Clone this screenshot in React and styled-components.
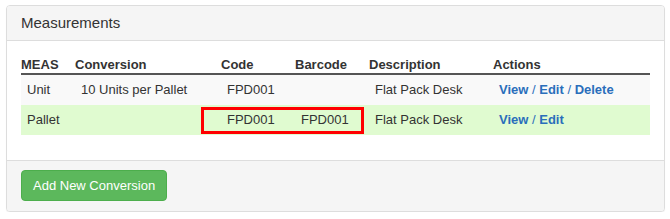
import React from 'react';
import styled, { createGlobalStyle } from 'styled-components';

const GlobalStyle = createGlobalStyle`
  html, body {
    margin: 0;
    padding: 0;
    background: #fff;
    font-family: "Liberation Sans", Arial, sans-serif;
    font-size: 13px;
    color: #333;
  }
`;

const Panel = styled.div`
  margin: 5px 0 0 6px;
  width: 659px;
  box-sizing: border-box;
  border: 1px solid #ddd;
  border-radius: 4px;
  background: #fff;
  box-shadow: 0 1px 1px rgba(0, 0, 0, 0.05);
  overflow: hidden;
`;

const PanelHeading = styled.div`
  padding: 8px 14px 8px 14px;
  background: #f5f5f5;
  border-bottom: 1px solid #ddd;
  font-size: 15px;
  line-height: 18px;
  color: #333;
`;

const PanelBody = styled.div`
  padding: 15px 14px 15px 14px;
`;

const TableWrap = styled.div`
  position: relative;
  margin-bottom: 10px;
`;

const Table = styled.table`
  width: 629px;
  border-collapse: collapse;
  table-layout: fixed;
`;

const Th = styled.th`
  text-align: left;
  font-weight: bold;
  padding: 0;
  line-height: 17px;
  border-bottom: 2px solid #555;
  color: #333;
`;

const Row = styled.tr`
  background: ${p => (p.$success ? '#e0fbd0' : '#f9f9f9')};
`;

const Td = styled.td`
  padding: 6px;
  line-height: 18px;
  white-space: nowrap;
`;

const Actions = styled.span`
  color: #2a6ebb;
`;

const ActionLink = styled.a`
  color: #2a6ebb;
  font-weight: bold;
  text-decoration: none;
  cursor: pointer;
`;

const Highlight = styled.div`
  position: absolute;
  left: 180px;
  top: 51px;
  width: 163px;
  height: 27px;
  box-sizing: border-box;
  border: 3px solid #f00;
  pointer-events: none;
`;

const PanelFooter = styled.div`
  padding: 9px 14px 10px 14px;
  background: #f5f5f5;
  border-top: 1px solid #ddd;
`;

const Button = styled.button`
  height: 31px;
  padding: 0 11px;
  font-family: inherit;
  font-size: 13px;
  color: #fff;
  background: #5cb85c;
  border: 1px solid #4cae4c;
  border-radius: 4px;
  cursor: pointer;
`;

const rows = [
  { meas: 'Unit', conversion: '10 Units per Pallet', code: 'FPD001', barcode: '', description: 'Flat Pack Desk', actions: ['View', 'Edit', 'Delete'] },
  { meas: 'Pallet', conversion: '', code: 'FPD001', barcode: 'FPD001', description: 'Flat Pack Desk', actions: ['View', 'Edit'], success: true },
];

const widths = [54, 146, 74, 74, 124, 157];

const App = () => {
  return (
    <>
      <GlobalStyle />
      <Panel>
        <PanelHeading>Measurements</PanelHeading>
        <PanelBody>
          <TableWrap>
            <Table>
              <colgroup>
                {widths.map((w, i) => <col key={i} style={{ width: w }} />)}
              </colgroup>
              <thead>
                <tr>
                  <Th>MEAS</Th>
                  <Th>Conversion</Th>
                  <Th>Code</Th>
                  <Th>Barcode</Th>
                  <Th>Description</Th>
                  <Th>Actions</Th>
                </tr>
              </thead>
              <tbody>
                {rows.map((r, i) => (
                  <Row key={i} $success={r.success}>
                    <Td>{r.meas}</Td>
                    <Td>{r.conversion}</Td>
                    <Td>{r.code}</Td>
                    <Td>{r.barcode}</Td>
                    <Td>{r.description}</Td>
                    <Td>
                      <Actions>
                        {r.actions.map((a, j) => (
                          <React.Fragment key={a}>
                            {j > 0 && ' / '}
                            <ActionLink>{a}</ActionLink>
                          </React.Fragment>
                        ))}
                      </Actions>
                    </Td>
                  </Row>
                ))}
              </tbody>
            </Table>
            <Highlight />
          </TableWrap>
        </PanelBody>
        <PanelFooter>
          <Button>Add New Conversion</Button>
        </PanelFooter>
      </Panel>
    </>
  );
};

export default App;
